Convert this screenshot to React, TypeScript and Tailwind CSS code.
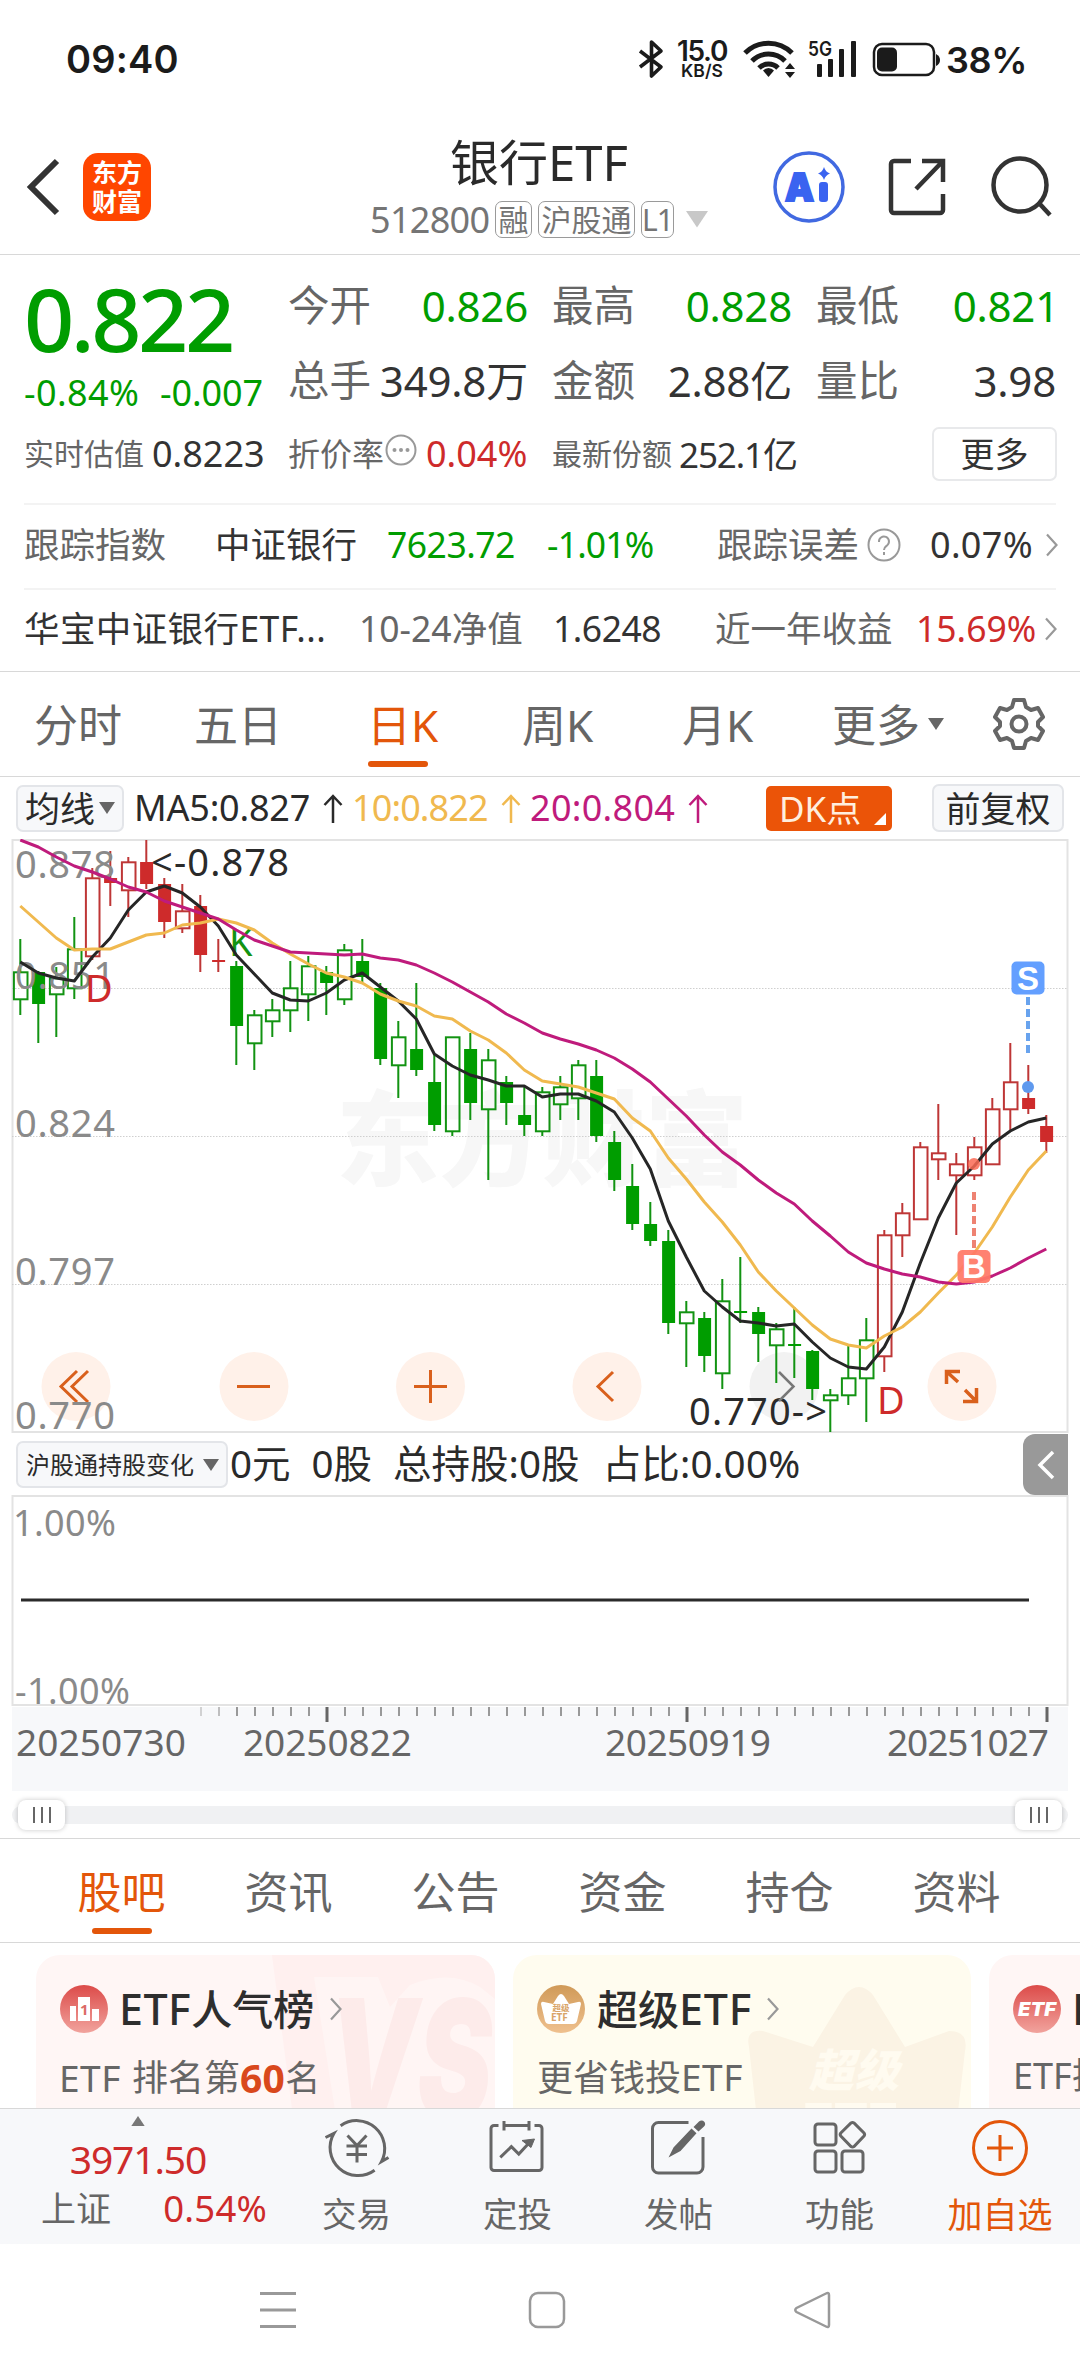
import React from "react";

const GREEN = "#009d00";
const RED = "#ce2b2b";
const ORANGE = "#e3560a";

// [high, bodyTop, bodyBottom, low, kind] - lower case is filled, upper case is hollow
type Candle = [number, number, number, number, "g" | "G" | "r" | "R"];

const candles: Candle[] = [
  [939, 972, 999, 1015, "G"], [971, 972, 1004, 1043, "g"], [967, 978, 994, 1037, "G"], [917, 949, 988, 999, "G"],
  [868, 878, 956, 960, "R"], [851, 878, 883, 906, "r"], [857, 862, 890, 917, "R"], [840, 862, 884, 889, "r"],
  [878, 884, 922, 938, "r"], [884, 911, 928, 933, "R"], [895, 906, 955, 972, "r"], [939, 960, 962, 972, "r"],
  [961, 966, 1026, 1065, "g"], [1010, 1015, 1043, 1070, "G"], [999, 1010, 1021, 1037, "G"], [961, 988, 1010, 1032, "G"],
  [956, 966, 994, 1021, "G"], [966, 972, 983, 1015, "g"], [944, 950, 999, 1005, "G"], [939, 961, 977, 982, "g"],
  [983, 988, 1059, 1065, "g"], [1021, 1037, 1065, 1098, "G"], [983, 1049, 1070, 1076, "g"], [1054, 1082, 1125, 1131, "g"],
  [1037, 1037, 1131, 1136, "G"], [1033, 1049, 1103, 1120, "g"], [1049, 1060, 1109, 1180, "G"], [1076, 1082, 1103, 1125, "g"],
  [1087, 1115, 1125, 1136, "g"], [1087, 1092, 1131, 1136, "G"], [1076, 1087, 1104, 1120, "G"], [1060, 1065, 1098, 1120, "G"],
  [1060, 1076, 1136, 1142, "g"], [1131, 1142, 1180, 1191, "g"], [1164, 1186, 1224, 1230, "g"], [1202, 1224, 1241, 1246, "g"],
  [1230, 1241, 1323, 1334, "g"], [1301, 1312, 1323, 1367, "G"], [1312, 1318, 1356, 1372, "g"], [1279, 1301, 1373, 1389, "G"],
  [1257, 1311, 1313, 1323, "g"], [1307, 1312, 1334, 1362, "g"], [1323, 1329, 1345, 1383, "G"], [1307, 1344, 1346, 1378, "g"],
  [1350, 1351, 1389, 1400, "g"], [1389, 1395, 1400, 1432, "G"], [1345, 1378, 1395, 1405, "G"], [1318, 1340, 1378, 1422, "G"],
  [1230, 1235, 1356, 1372, "R"], [1203, 1213, 1235, 1257, "R"], [1142, 1147, 1219, 1219, "R"], [1104, 1153, 1159, 1180, "R"],
  [1153, 1164, 1175, 1235, "R"], [1137, 1147, 1175, 1180, "R"], [1098, 1109, 1164, 1164, "R"], [1043, 1082, 1109, 1131, "R"],
  [1065, 1098, 1109, 1114, "r"], [1115, 1126, 1142, 1153, "r"],
];

const ma5 = [
  962, 973, 978, 981, 957, 938, 910, 892, 886, 893, 907, 926, 955, 974, 993, 1000, 1001, 993, 980, 973,
  987, 1001, 1019, 1054, 1066, 1075, 1080, 1086, 1086, 1097, 1094, 1094, 1101, 1112, 1138, 1169, 1221, 1257, 1291, 1307,
  1321, 1323, 1326, 1324, 1342, 1358, 1367, 1369, 1347, 1312, 1263, 1218, 1183, 1166, 1144, 1131, 1122, 1118,
];
const ma10 = [
  906, 922, 938, 950, 949, 949, 942, 935, 933, 925, 923, 919, 923, 930, 943, 954, 964, 973, 977, 983,
  994, 1001, 1006, 1016, 1019, 1031, 1040, 1053, 1070, 1081, 1084, 1087, 1093, 1099, 1118, 1131, 1158, 1179, 1202, 1222,
  1245, 1272, 1291, 1308, 1325, 1339, 1345, 1348, 1336, 1327, 1312, 1293, 1275, 1253, 1227, 1197, 1170, 1151,
];
const ma20 = [
  840, 847, 857, 866, 872, 879, 887, 892, 901, 907, 913, 919, 930, 940, 946, 952, 953, 954, 955, 954,
  958, 960, 965, 973, 982, 992, 1002, 1014, 1023, 1033, 1039, 1044, 1050, 1058, 1069, 1082, 1099, 1116, 1135, 1152,
  1165, 1180, 1193, 1204, 1221, 1236, 1252, 1263, 1269, 1274, 1277, 1282, 1284, 1282, 1276, 1268, 1258, 1249,
];

const xAt = (i: number) => 20.3 + i * 18;
const toPoints = (ys: number[]) => ys.map((y, i) => `${xAt(i)},${y}`).join(" ");

const Chevron: React.FC<{ className?: string }> = ({ className = "" }) => (
  <svg className={`shrink-0 ${className}`} width="12" height="24" viewBox="0 0 12 24" fill="none" stroke="#999" strokeWidth="2.200">
    <path d="M1 1.500 10.500 12 1 22.500" />
  </svg>
);

const Triangle: React.FC<{ size: number; color: string; className?: string }> = ({ size, color, className = "" }) => (
  <svg className={`shrink-0 ${className}`} width={size} height={size * 0.75} viewBox="0 0 20 15" fill={color}>
    <path d="M0 0h20L10 15z" />
  </svg>
);

const StatusBar: React.FC = () => (
  <div className="flex h-[120px] items-start pt-[39px] pl-[66px] font-semibold text-[#1b1b1b] font-[Inter]">
    <div className="w-[571px] text-[38px] leading-[40px] tracking-[0.2px]">09:40</div>
    <svg width="28" height="40" viewBox="0 0 28 40" fill="none" stroke="#1b1b1b" strokeWidth="3.600">
      <path d="M3 12 24 28 14.500 37V3L24 12 3 28" strokeLinejoin="round" />
    </svg>
    <div className="ml-[6px] w-[62px] text-center">
      <div className="text-[28px] leading-[24px] tracking-[-1.300px]">15.0</div>
      <div className="text-[17.500px] leading-[15px]">KB/S</div>
    </div>
    <svg className="ml-[10px]" width="54" height="40" viewBox="0 0 54 40" fill="none" stroke="#1b1b1b" strokeWidth="5">
      <path d="M2 14a33 33 0 0 1 47 0M9 22a23 23 0 0 1 33 0M16 29a13.500 13.500 0 0 1 19 0" />
      <path d="M25.500 29a8 8 0 0 1 5.500 2.500L25.500 38 20 31.500a8 8 0 0 1 5.500-2.500z" fill="#1b1b1b" stroke="none" />
      <path d="M42 30 47 24 52 30zM42 33 47 39 52 33z" fill="#1b1b1b" stroke="none" />
    </svg>
    <svg className="ml-[11px]" width="50" height="40" viewBox="0 0 50 40" fill="#1b1b1b">
      <text x="0" y="17" fontSize="20" textLength="24" lengthAdjust="spacingAndGlyphs">5G</text>
      <rect x="9" y="25" width="5" height="13" rx="1" />
      <rect x="20" y="20" width="5" height="18" rx="1" />
      <rect x="31" y="10" width="5" height="28" rx="1" />
      <rect x="43" y="2" width="5" height="36" rx="1" />
    </svg>
    <svg className="ml-[14px]" width="68" height="40" viewBox="0 0 68 40">
      <rect x="2" y="5" width="60" height="31" rx="8" fill="none" stroke="#1b1b1b" strokeWidth="2.500" />
      <rect x="5" y="8.500" width="20" height="24" rx="5" fill="#1b1b1b" />
      <path d="M64 15q4 2 4 6t-4 6z" fill="#1b1b1b" />
    </svg>
    <div className="ml-[6px] text-[36px] leading-[42px] tracking-[-0.300px]">38%</div>
  </div>
);

const Tag: React.FC<{ children: React.ReactNode; className: string }> = ({ children, className }) => (
  <span className={`flex h-[37px] items-center justify-center rounded-[7px] border-[1.500px] border-[#9a9a9a] text-[30px] leading-none ${className}`}>
    {children}
  </span>
);

const Header: React.FC = () => (
  <header className="flex h-[135px] items-center border-b border-[#d8d8d8] pl-[26px]">
    <svg width="34" height="58" viewBox="0 0 34 58" fill="none" stroke="#333" strokeWidth="6">
      <path d="M31 3 5 29l26 26" />
    </svg>
    <div className="ml-[23px] flex h-[68px] w-[68px] flex-col items-center justify-center rounded-[15px] bg-[#ff4600] text-[25px] leading-[29px] font-bold text-white">
      <span>东方</span>
      <span>财富</span>
    </div>
    <div className="ml-[217px] flex w-[342px] flex-col">
      <div className="w-[342px] text-center text-[49px] leading-[52px] text-[#2a2a2a]">银行ETF</div>
      <div className="mt-[13px] flex h-[37px] items-center gap-[6px] text-[#757575]">
        <span className="w-[121px] pl-[2px] text-[36px] leading-none tracking-[-0.700px]">512800</span>
        <Tag className="w-[37px]">融</Tag>
        <Tag className="w-[97px]">沪股通</Tag>
        <Tag className="w-[33px] text-[28px] tracking-[-1px]">L1</Tag>
        <Triangle size={22} color="#c8c8c8" className="ml-[6px]" />
      </div>
    </div>
    <svg className="ml-[63px] shrink-0" width="72" height="72" viewBox="0 0 72 72">
      <circle cx="36" cy="36" r="34" fill="#fff" stroke="#4169e1" strokeWidth="3.500" />
      <text x="12" y="50" fontSize="39" fontWeight="900" fill="#3a63f0" stroke="#3a63f0" strokeWidth="2" fontFamily="Inter" textLength="29" lengthAdjust="spacingAndGlyphs">A</text>
      <rect x="46" y="31" width="9" height="20" rx="3" fill="#3a63f0" />
      <path d="M51 16q1.500 5 6 6.500-4.500 1.500-6 6.500-1.500-5-6-6.500 4.500-1.500 6-6.500z" fill="#3a63f0" />
    </svg>
    <svg className="ml-[43px] shrink-0" width="58" height="60" viewBox="0 0 58 60" fill="none" stroke="#333" strokeWidth="4.500">
      <path d="M23 4H6a3 3 0 0 0-3 3v46a3 3 0 0 0 3 3h46a3 3 0 0 0 3-3V37M34 4h21v21M54 5 28 32" />
    </svg>
    <svg className="ml-[45px] shrink-0" width="62" height="62" viewBox="0 0 62 62" fill="none" stroke="#333" strokeWidth="4.500">
      <circle cx="29" cy="29" r="26.500" />
      <path d="M47 46 59 59" />
    </svg>
  </header>
);

const Stat: React.FC<{ label: string; value: string; tone?: string; className?: string }> = ({
  label,
  value,
  tone = "text-[#333]",
  className = "w-[240px]",
}) => (
  <div className={`flex h-[44px] items-center justify-between whitespace-nowrap ${className}`}>
    <span className="text-[41.500px] text-[#666]">{label}</span>
    <span className={`text-[42px] tracking-[-0.200px] ${tone}`}>{value}</span>
  </div>
);

const Quote: React.FC = () => (
  <section className="leading-none text-[#333]">
    <div className="flex h-[172px] pl-[24px]">
      <div className="w-[264px] pt-[32px] text-[#009d00]">
        <div className="text-[88px] leading-[62px] font-medium tracking-[-3.500px]">0.822</div>
        <div className="mt-[26px] flex text-[36px] leading-[36px]">
          <span className="w-[136px] tracking-[0.400px]">-0.84%</span>
          <span className="tracking-[-0.100px]">-0.007</span>
        </div>
      </div>
      <div className="flex flex-col gap-[31px] pt-[29px]">
        <div className="flex gap-[24px]">
          <Stat label="今开" value="0.826" tone="text-[#009d00]" />
          <Stat label="最高" value="0.828" tone="text-[#009d00]" />
          <Stat label="最低" value="0.821" tone="text-[#009d00]" className="w-[243px]" />
        </div>
        <div className="flex gap-[24px]">
          <Stat label="总手" value="349.8万" />
          <Stat label="金额" value="2.88亿" />
          <Stat label="量比" value="3.98" />
        </div>
      </div>
    </div>
    <div className="flex h-[54px] items-center pl-[24px] text-[36px] whitespace-nowrap">
      <span className="w-[128px] text-[30px] text-[#666]">实时估值</span>
      <span className="w-[136px]">0.8223</span>
      <span className="text-[32px] text-[#666]">折价率</span>
      <svg className="mb-[8px] ml-px shrink-0" width="32" height="32" viewBox="0 0 32 32" fill="#999">
        <circle cx="16" cy="16" r="14.500" fill="none" stroke="#999" strokeWidth="2" />
        <circle cx="9.500" cy="16" r="2" />
        <circle cx="16" cy="16" r="2" />
        <circle cx="22.500" cy="16" r="2" />
      </svg>
      <span className="w-[135px] pl-[9px] text-[#ce2b2b]">0.04%</span>
      <span className="w-[127px] text-[30px] text-[#666]">最新份额</span>
      <span className="w-[253px] text-[35px] tracking-[-1.100px]">252.1亿</span>
      <span className="flex h-[54px] w-[125px] items-center justify-center rounded-[7px] border-2 border-[#e8e9eb] text-[34px]">更多</span>
    </div>
    <div className="mx-[24px] mt-[22px] h-[2px] bg-[#f3f3f3]" />
    <div className="flex h-[83px] items-center pb-[3px] pl-[24px] text-[35.500px] whitespace-nowrap">
      <span className="w-[191px] text-[#666]">跟踪指数</span>
      <span className="w-[172px]">中证银行</span>
      <span className="w-[160px] tracking-[-0.500px] text-[#009d00]">7623.72</span>
      <span className="w-[170px] tracking-[-0.800px] text-[#009d00]">-1.01%</span>
      <span className="text-[#666]">跟踪误差</span>
      <svg className="ml-[8px] shrink-0" width="34" height="34" viewBox="0 0 34 34" fill="none" stroke="#999" strokeWidth="2">
        <circle cx="17" cy="17" r="15.500" />
        <path d="M12 14a5 5 0 1 1 8 3.500c-2 1.500-3 2-3 4.500" />
        <path d="M17 24v3" />
      </svg>
      <span className="ml-[29px] w-[116px] text-[36px] tracking-[0.300px]">0.07%</span>
      <Chevron />
    </div>
    <div className="mx-[24px] h-[2px] bg-[#f3f3f3]" />
    <div className="flex h-[81px] items-center pb-[3px] pl-[24px] text-[35.500px] whitespace-nowrap">
      <span className="w-[335px] tracking-[0.400px]">华宝中证银行ETF...</span>
      <span className="w-[194px] text-[#666]">10-24净值</span>
      <span className="w-[162px] tracking-[-0.500px]">1.6248</span>
      <span className="w-[201px] text-[#666]">近一年收益</span>
      <span className="w-[129px]  text-[#ce2b2b]">15.69%</span>
      <Chevron />
    </div>
  </section>
);

const PeriodTabs: React.FC = () => (
  <nav className="flex h-[106px] border-y border-[#d8d8d8] pl-[34px] text-[44px] leading-[48px] text-[#666]">
    <span className="w-[160px] pt-[29px]">分时</span>
    <span className="w-[173px] pt-[29px]">五日</span>
    <span className="w-[155px] pt-[29px] text-[#e3560a]">
      日K
      <i className="mt-[12px] ml-[1px] block h-[6px] w-[60px] rounded-full bg-[#e3560a]" />
    </span>
    <span className="w-[160px] pt-[29px]">周K</span>
    <span className="w-[150px] pt-[29px]">月K</span>
    <span className="flex w-[161px] pt-[29px]">
      更多
      <Triangle size={16} color="#666" className="mt-[17px] ml-[8px]" />
    </span>
    <svg className="mt-[25px] shrink-0" width="52" height="54" viewBox="0 0 52 54" fill="none" stroke="#666" strokeWidth="4">
      <path d="M21 3h10l2 7 5 3 7-2 5 9-5 5v4l5 5-5 9-7-2-5 3-2 7H21l-2-7-5-3-7 2-5-9 5-5v-4l-5-5 5-9 7 2 5-3z" strokeLinejoin="round" />
      <circle cx="26" cy="27" r="7.500" />
    </svg>
  </nav>
);

const Arrow: React.FC<{ color: string }> = ({ color }) => (
  <svg className="shrink-0" width="20" height="29" viewBox="0 0 20 29" fill="none" stroke={color} strokeWidth="2.500">
    <path d="M10 29V2M1.500 11 10 2l8.500 9" />
  </svg>
);

const MaLegend: React.FC = () => (
  <div className="flex h-[62px] items-center pl-[16px] text-[36px] leading-none whitespace-nowrap">
    <span className="flex h-[47px] w-[108px] items-center rounded-[7px] border-2 border-[#e3e5e9] bg-[#f7f8fa] pl-[7px] text-[35px] text-[#2a2a2a]">
      均线
      <Triangle size={16} color="#666" className="ml-[4px]" />
    </span>
    <span className="flex w-[228px] items-center pr-[9px] pl-[10px] text-[#2a2a2a]">
      <span className="flex-1 tracking-[-0.200px]">MA5:0.827</span>
      <Arrow color="#2a2a2a" />
    </span>
    <span className="flex w-[178px] items-center pr-[9px] text-[#f0b94f]">
      <span className="flex-1 tracking-[-0.900px]">10:0.822</span>
      <Arrow color="#f0b94f" />
    </span>
    <span className="flex w-[178px] items-center text-[#bf1b7c]">
      <span className="flex-1 tracking-[0.300px]">20:0.804</span>
      <Arrow color="#bf1b7c" />
    </span>
    <span className="relative ml-[58px] flex h-[45px] w-[126px] items-center rounded-[5px] bg-[#eb5408] pl-[13px] text-[35px] text-[#ffeede]">
      DK点
      <i className="absolute right-[6px] bottom-[6px] h-0 w-0 border-b-[12px] border-l-[12px] border-b-white border-l-transparent" />
    </span>
    <span className="ml-[40px] flex h-[48px] w-[132px] items-center justify-center rounded-[7px] border-2 border-[#e3e5e9] bg-[#f7f8fa] text-[35px] text-[#2a2a2a]">
      前复权
    </span>
  </div>
);

const priceLabels = [
  { y: 878, text: "0.878" },
  { y: 989, text: "0.851" },
  { y: 1137, text: "0.824" },
  { y: 1285, text: "0.797" },
  { y: 1429, text: "0.770" },
];

const KLineChart: React.FC = () => (
  <svg className="block" width="1080" height="595" viewBox="0 839 1080 595">
    <rect x="12.500" y="840" width="1055" height="592" fill="none" stroke="#e3e3e3" strokeWidth="2" />
    <text x="336" y="1178" fontSize="103" fontWeight="900" fill="#f7f7f7">东方财富</text>
    {[988.5, 1136.5, 1284.5].map((y) => (
      <line key={y} x1="12" x2="1067" y1={y} y2={y} stroke="#cfcfcf" strokeDasharray="1.500 1.500" />
    ))}
    {[76, 254, 430.5, 607, 784, 962].map((x) => (
      <circle key={x} cx={x} cy="1386.500" r="34.500" fill={x === 784 ? "#f2f2f2" : "#fff1e9"} />
    ))}
    <g fill="none" stroke="#d9601c" strokeWidth="3">
      <path d="M77 1371 61 1386.500 77 1402M88 1371 72 1386.500 88 1402" />
      <path d="M237 1386.500h33M414 1386.500h33M430.500 1370v33" />
      <path d="M613 1372 598 1386.500 613 1401" />
      <path d="M958 1382 946.500 1371.500M946.500 1384V1371.500H960M965 1390 976.500 1401.500M976.500 1388V1401.500H963" strokeWidth="3.500" />
    </g>

    {candles.map(([high, top, bottom, low, kind], i) => {
      const x = xAt(i);
      const green = kind === "g" || kind === "G";
      const hollow = kind === "G" || kind === "R";
      const color = green ? "#129312" : "#be3636";
      return (
        <g key={i} stroke={color} strokeWidth="2">
          <path d={`M${x} ${high}V${top}M${x} ${bottom}V${low}`} />
          {hollow ? (
            <rect x={x - 6.4} y={top + 0.3} width="13.600" height={bottom - top} fill="none" />
          ) : (
            <rect x={x - 6.2} y={top} width="13" height={bottom - top} fill={green ? GREEN : RED} stroke="none" />
          )}
        </g>
      );
    })}

    <g fontSize="38" fill="#8a8a8a">
      {priceLabels.map((l) => (
        <text key={l.text} x="15" y={l.y} textLength="100">{l.text}</text>
      ))}
    </g>
    <g fontSize="38" fill="#2a2a2a">
      <text x="151" y="876" textLength="138">&lt;-0.878</text>
      <text x="689" y="1425" textLength="138">0.770-&gt;</text>
    </g>
    <g fontSize="38">
      <text x="229" y="956" fill="#129312">K</text>
      <text x="85" y="1002" fill={RED}>D</text>
      <text x="877" y="1414" fill={RED}>D</text>
    </g>

    <g fill="none" strokeWidth="3" strokeLinejoin="round">
      <polyline points={toPoints(ma5)} stroke="#262626" />
      <polyline points={toPoints(ma10)} stroke="#f0b94f" />
      <polyline points={toPoints(ma20)} stroke="#bf1b7c" />
    </g>
    <path d="M779 1372 793.500 1386.500 779 1401" fill="none" stroke="#777" strokeWidth="2.500" />

    {/* trade markers */}
    <path d="M1028 997V1053" stroke="#68a3ee" strokeWidth="4" strokeDasharray="8 4" />
    <circle cx="1028" cy="1087" r="6" fill="#5f99ee" />
    <rect x="1011.500" y="961.500" width="33" height="33" rx="5" fill="#639fff" />
    <path d="M974 1192V1248" stroke="#ee8272" strokeWidth="4" strokeDasharray="8 4" />
    <circle cx="974" cy="1164" r="6" fill="#fa6a54" fillOpacity=".85" />
    <rect x="957.500" y="1250" width="33" height="33" rx="5" fill="#ff7866" fillOpacity=".93" />
    <g fill="#fff" fontSize="33" fontWeight="600" textAnchor="middle" fontFamily="Liberation Sans">
      <text x="1028" y="990">S</text>
      <text x="974" y="1278">B</text>
    </g>
  </svg>
);

const ticks = Array.from({ length: 48 }, (_, i) => 201 + i * 18);

const Handle: React.FC = () => (
  <span className="flex h-[30px] w-[47px] items-center justify-center gap-[6px] rounded-[8px] bg-white shadow-[0_0_5px_rgba(0,0,0,0.22)]">
    <i className="h-[16px] w-[2px] bg-[#666]" />
    <i className="h-[16px] w-[2px] bg-[#666]" />
    <i className="h-[16px] w-[2px] bg-[#666]" />
  </span>
);

const IndicatorPane: React.FC = () => (
  <>
    <div className="flex h-[61px] items-center pl-[16px] whitespace-nowrap text-[#2a2a2a]">
      <span className="flex h-[47px] w-[212px] items-center rounded-[7px] border-2 border-[#e3e5e9] bg-[#f7f8fa] pl-[8px] text-[24px] leading-none">
        沪股通持股变化
        <Triangle size={16} color="#666" className="ml-[9px]" />
      </span>
      <span className="flex w-[795px] gap-[21px] pb-[2px] pl-[2px] text-[38.500px] leading-none">
        <span>0元</span>
        <span>0股</span>
        <span>总持股:0股</span>
        <span className="pl-[2px] tracking-[0.300px]">占比:0.00%</span>
      </span>
      <span className="flex h-[61px] w-[45px] items-center justify-center rounded-l-[12px] bg-[#999]">
        <svg width="18" height="30" viewBox="0 0 18 30" fill="none" stroke="#fff" strokeWidth="3.500">
          <path d="M16 2 3 15l13 13" />
        </svg>
      </span>
    </div>
    <svg className="block" width="1080" height="297" viewBox="0 1495 1080 297">
      <rect x="12" y="1707" width="1056" height="84" fill="#f7f8fa" />
      <rect x="12.500" y="1496" width="1055" height="209" fill="none" stroke="#e3e3e3" strokeWidth="2" />
      <path d="M21 1600H1029" stroke="#2b2b2b" strokeWidth="3" />
      <g fontSize="36" fill="#8a8a8a">
        <text x="13" y="1536" textLength="103">1.00%</text>
        <text x="15" y="1704" textLength="115">-1.00%</text>
      </g>
      {ticks.map((x, i) => {
        const major = (x - 327) % 360 === 0;
        return (
          <line
            key={x}
            x1={x}
            x2={x}
            y1="1707"
            y2={major ? 1722 : 1716}
            stroke={major ? "#666" : "#999"}
            strokeWidth={major ? 3 : 2}
            opacity={i === 0 ? 0.4 : i === 1 ? 0.6 : 1}
          />
        );
      })}
      <g fontSize="37" fill="#666">
        <text x="16" y="1756" textLength="170">20250730</text>
        <text x="243" y="1756" textLength="169">20250822</text>
        <text x="605" y="1756" textLength="166">20250919</text>
        <text x="887" y="1756" textLength="162">20251027</text>
      </g>
    </svg>
    <div className="flex h-[46px] items-center pb-[1px] pl-[12px]">
      <div className="flex h-[18px] w-[1056px] items-center justify-between rounded-full bg-[#f0f1f3] px-[6px]">
        <Handle />
        <Handle />
      </div>
    </div>
  </>
);

const sections = ["股吧", "资讯", "公告", "资金", "持仓", "资料"];

const SectionTabs: React.FC = () => (
  <nav className="flex h-[105px] border-y border-[#d8d8d8] pl-[38px] text-[44px] leading-[48px] text-[#666]">
    {sections.map((name, i) => (
      <span key={name} className={`flex w-[167px] flex-col items-center pt-[29px] ${i === 0 ? "text-[#e3560a]" : ""}`}>
        {name}
        {i === 0 && <i className="mt-[12px] block h-[6px] w-[60px] rounded-full bg-[#e3560a]" />}
      </span>
    ))}
  </nav>
);

const Cards: React.FC = () => (
  <section className="flex h-[165px] gap-[18px] overflow-hidden pt-[12px] pl-[36px] leading-none whitespace-nowrap text-[#666]">
    <div className="relative h-[200px] w-[459px] shrink-0 overflow-hidden rounded-[24px] bg-[#fff6f5]">
      <svg className="absolute top-0 left-0" width="459" height="200" viewBox="0 0 459 200">
        <path d="M236 0H459V200H262z" fill="#fff0ef" />
        <path d="M278 22h64l12 30 20-22q40-16 70 2l15 12v156H306z" fill="#fff5f4" />
        <text x="292" y="164" fontSize="166" fontWeight="900" fontStyle="italic" fontFamily="Inter" fill="#fdebea" textLength="164" lengthAdjust="spacingAndGlyphs">VS</text>
      </svg>
      <div className="relative mt-[30px] flex h-[48px] items-center pl-[24px]">
        <svg width="48" height="48" viewBox="0 0 48 48">
          <defs>
            <linearGradient id="rank" x1="0" y1="0" x2="0" y2="1">
              <stop stopColor="#dc4b49" />
              <stop offset="1" stopColor="#f1a39d" />
            </linearGradient>
          </defs>
          <circle cx="24" cy="24" r="24" fill="url(#rank)" />
          <path d="M10 21h6v15h-6zM18 12h12v24H18zM32 24h7v12h-7z" fill="#fff" />
          <text x="20" y="30" fontSize="15" fontWeight="700" fill="#dc6a66">1</text>
        </svg>
        <span className="ml-[11px] pb-[2px] text-[41px] font-medium text-[#2e2e2e]">
          <span className="text-[43px] tracking-[0.500px]">ETF</span>人气榜
        </span>
        <Chevron className="ml-[16px]" />
      </div>
      <div className="relative mt-[25px] flex items-center pl-[23px] text-[36px]">
        <span className="w-[73px] text-[37px] tracking-[0.500px]">ETF</span>
        排名第
        <b className="text-[39px] tracking-[0.300px] text-[#d9481c]">60</b>
        <span className="text-[35px]">名</span>
      </div>
    </div>
    <div className="relative h-[200px] w-[458px] shrink-0 overflow-hidden rounded-[24px] bg-[#fffcef]">
      <svg className="absolute top-0 left-0" width="458" height="200" viewBox="0 0 458 200">
        <path d="M236 92Q232 74 250 76L300 92 332 40Q346 24 360 40L392 92 436 76Q456 76 452 96L440 200H248z" fill="#fbf3e4" />
        <text x="296" y="132" fontSize="45" fontWeight="900" fontStyle="italic" fill="#fffbf0">超级</text>
        <text x="290" y="184" fontSize="50" fontWeight="900" fontFamily="Inter" fill="#fffbf0">ETF</text>
      </svg>
      <div className="relative mt-[30px] flex h-[48px] items-center pl-[24px]">
        <svg width="48" height="48" viewBox="0 0 48 48">
          <defs>
            <linearGradient id="gold" x1="0" y1="0" x2="0" y2="1">
              <stop stopColor="#d09a58" />
              <stop offset="1" stopColor="#efc08e" />
            </linearGradient>
          </defs>
          <circle cx="24" cy="24" r="24" fill="url(#gold)" />
          <path d="M4 19Q4 16 7 17L16 19 21 11Q24 7 27 11L32 19 41 17Q44 16 44 19L40 36Q39 39 36 39H12Q9 39 8 36z" fill="#fff" />
          <text x="15.500" y="26" fontSize="8.500" fontWeight="700" fill="#d9a468">超级</text>
          <text x="14" y="36" fontSize="10" fontWeight="700" fill="#d9a468">ETF</text>
        </svg>
        <span className="ml-[12px] pb-[2px] text-[41px] font-medium text-[#2e2e2e]">
          超级<span className="text-[43px] tracking-[0.800px]">ETF</span>
        </span>
        <Chevron className="ml-[15px]" />
      </div>
      <div className="relative mt-[25px] pl-[24px] text-[36px]">
        更省钱投<span className="text-[37px] tracking-[0.500px]">ETF</span>
      </div>
    </div>
    <div className="h-[200px] w-[459px] shrink-0 rounded-[24px] bg-[#fff6f5]">
      <div className="mt-[30px] flex h-[48px] items-center pl-[24px]">
        <svg className="shrink-0" width="48" height="48" viewBox="0 0 48 48">
          <circle cx="24" cy="24" r="24" fill="url(#rank)" />
          <text x="24" y="31" fontSize="19" fontWeight="900" fontStyle="italic" fontFamily="Inter" fill="#fff" textAnchor="middle" textLength="38" lengthAdjust="spacingAndGlyphs">ETF</text>
        </svg>
        <span className="ml-[11px] pb-[2px] text-[43px] font-medium text-[#2e2e2e]">ETF</span>
      </div>
      <div className="mt-[25px] pl-[24px] text-[36px]">ETF排行</div>
    </div>
  </section>
);

const actions = [
  {
    name: "交易",
    icon: (
      <>
        <path d="M15.600 9.700A28 28 0 0 1 56.500 45.600L63.500 41.500M49.600 54.200A28 28 0 0 1 9 17.300L.5 21.500" />
        <path d="M22.500 19.500 32 29.500 41.500 19.500M32 29.500v17M21.500 30h20.500M21.500 38.500h20.500" />
      </>
    ),
  },
  {
    name: "定投",
    icon: (
      <>
        <path d="M12.500 9.500H8a3 3 0 0 0-3 3V51.500a3 3 0 0 0 3 3h45a3 3 0 0 0 3-3V12.500a3 3 0 0 0-3-3h-4.500M18 9.500h25M18 5v9.500M43 5v9.500" />
        <path d="M14.300 41.300 25.400 30.700 32.800 38 43 27" />
        <path d="M48.500 23 36 24.500 45 31.500z" fill="#666" strokeWidth="1" stroke="#666" />
      </>
    ),
  },
  {
    name: "发帖",
    icon: (
      <>
        <path d="M41.500 6.500H11.500a6 6 0 0 0-6 6V51a6 6 0 0 0 6 6H50a6 6 0 0 0 6-6V21" />
        <path d="M21.500 41.500 26.500 31.500 44.500 12.500 49.500 17.300 33.500 35zM46.500 11 52 5.500Q55 3.500 57.500 6 59 8.500 57 10.500L51.500 15.500z" fill="#666" stroke="none" />
      </>
    ),
  },
  {
    name: "功能",
    icon: (
      <>
        <rect x="7" y="8" width="21" height="21" rx="3" />
        <rect x="7" y="35" width="21" height="21" rx="3" />
        <rect x="34" y="35" width="21" height="21" rx="3" />
        <path d="M32.800 17 43 7q1.500-1 3 0L56 17q1.200 1.500 0 3L46 30.500q-1.500 1-3 0L32.800 20q-1.200-1.500 0-3z" />
      </>
    ),
  },
];

const BottomBar: React.FC = () => (
  <footer className="flex h-[136px] border-t border-[#d8d8d8] bg-[#f7f8fa] leading-none whitespace-nowrap text-[#666]">
    <div className="flex w-[276px] flex-col items-center text-[#ce2b2b]">
      <Triangle size={20} color="#777" className="mt-[7px] h-[10px] rotate-180" />
      <div className="mt-[13px] text-[39px] tracking-[-1.100px]">3971.50</div>
      <div className="mt-[12px] flex w-full items-center justify-between pr-[9px] pl-[41px] text-[35px]">
        <span className="text-[#666]">上证</span>
        <span className="text-[36.500px] tracking-[0.200px]">0.54%</span>
      </div>
    </div>
    {actions.map((a) => (
      <div key={a.name} className="flex w-[161px] flex-col items-center pt-[7px]">
        <svg className="overflow-visible" width="64" height="64" viewBox="0 0 64 64" fill="none" stroke="#666" strokeWidth="3">
          {a.icon}
        </svg>
        <span className="mt-[17px] text-[34.500px]">{a.name}</span>
      </div>
    ))}
    <div className="flex w-[160px] flex-col items-center pt-[7px] text-[#e3560a]">
      <svg width="64" height="64" viewBox="0 0 64 64" fill="none" stroke={ORANGE} strokeWidth="3">
        <circle cx="32" cy="32" r="26.500" />
        <path d="M32 19v26M19 32h26" />
      </svg>
      <span className="mt-[17px] text-[35px]">加自选</span>
    </div>
  </footer>
);

const SystemNav: React.FC = () => (
  <div className="flex h-[132px] items-center justify-between pr-[249px] pl-[259px]">
    <svg width="38" height="40" viewBox="0 0 38 40" stroke="#999" strokeWidth="3">
      <path d="M1 3.500h36M1 20h36M1 36.500h36" />
    </svg>
    <svg className="ml-[3px]" width="38" height="40" viewBox="0 0 38 40" fill="none" stroke="#999" strokeWidth="2.500">
      <rect x="2" y="3" width="34" height="34" rx="8" />
    </svg>
    <svg width="38" height="40" viewBox="0 0 38 40" fill="none" stroke="#999" strokeWidth="2.500">
      <path d="M33 3.500Q36 2 36 5V35Q36 38 33 36.500L3.500 22Q1 20 3.500 18z" />
    </svg>
  </div>
);

export default function App() {
  return (
    <div className="h-[2376px] w-[1080px] overflow-hidden bg-white font-['Noto_Sans','Noto_Sans_CJK_SC',sans-serif]">
      <StatusBar />
      <Header />
      <Quote />
      <PeriodTabs />
      <MaLegend />
      <KLineChart />
      <IndicatorPane />
      <SectionTabs />
      <Cards />
      <BottomBar />
      <SystemNav />
    </div>
  );
}
